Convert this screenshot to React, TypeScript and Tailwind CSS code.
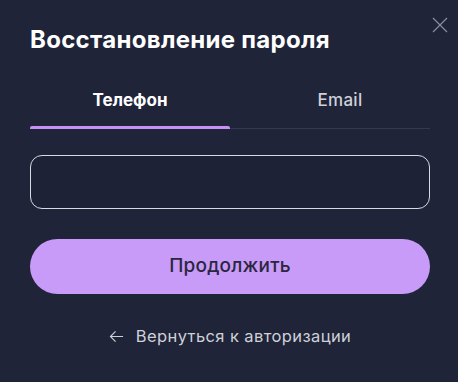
import React from "react";

export default function App() {
  return (
    <div className="relative w-[458px] h-[382px] bg-[#1f2439] text-white overflow-hidden" style={{ fontFamily: "Inter, 'Noto Sans', sans-serif" }}>
      <button className="absolute right-[10px] top-[17px] w-[16px] h-[16px] text-[#8a8e9c]">
        <svg viewBox="0 0 16 16" width="16" height="16" fill="none" stroke="currentColor" strokeWidth="1.2">
          <path d="M1 1L15 15M15 1L1 15" />
        </svg>
      </button>
      <div className="pl-[30px] pr-[28px] pt-[24px] flex flex-col">
        <h1 className="text-[24px] leading-[32px] font-bold text-white tracking-[0.3px]">Восстановление пароля</h1>
        <div className="mt-[31px] flex">
          <div className="flex-1 flex flex-col items-center">
            <span className="text-[17px] leading-[26px] font-bold text-white">Телефон</span>
            <div className="mt-[13px] h-[3px] w-full bg-[#c98ff5] rounded-t-[2px]" />
          </div>
          <div className="flex-1 flex flex-col items-center">
            <span className="pl-[20px] text-[17px] leading-[26px] font-medium text-[#d0d1d8] tracking-[0.3px]">Email</span>
            <div className="mt-[15px] h-[1px] w-full bg-[#343a4e]" />
          </div>
        </div>
        <div className="mt-[26px] h-[54px] rounded-[12px] border border-[#d9dbe3] bg-[#1d2236]" />
        <button className="mt-[30px] h-[55px] rounded-full bg-[#c79bf7] text-[#2a2640] text-[19px] font-medium tracking-[0.2px]">
          Продолжить
        </button>
        <div className="mt-[30px] flex items-center justify-center gap-[12px] text-[#cfd1d9]">
          <svg viewBox="0 0 16 16" width="15" height="15" fill="none" stroke="currentColor" strokeWidth="1.2">
            <path d="M15 8H1.5M7 2.5L1.5 8L7 13.5" />
          </svg>
          <span className="text-[16.5px] leading-[24px] tracking-[0.4px]">Вернуться к авторизации</span>
        </div>
      </div>
    </div>
  );
}
